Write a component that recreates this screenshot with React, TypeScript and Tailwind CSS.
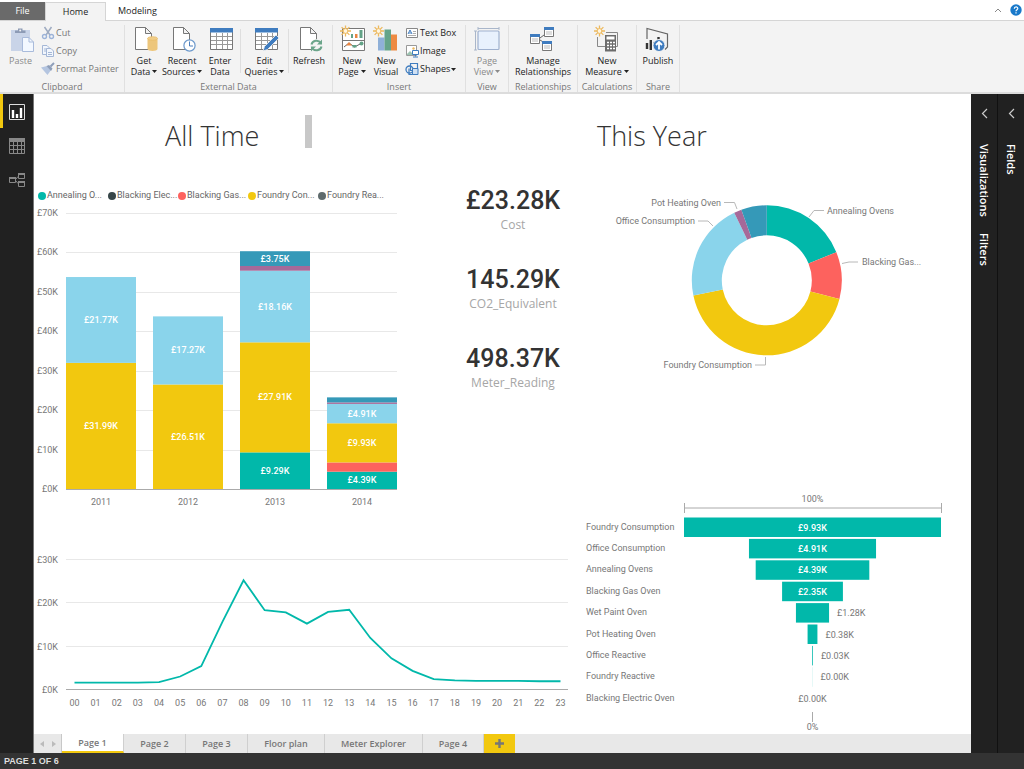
import type { ReactNode } from "react";

const C = {
  teal: "#01b8aa",
  dark: "#374649",
  red: "#fd625e",
  yellow: "#f2c80f",
  slate: "#5f6b6d",
  sky: "#8ad4eb",
  blue: "#3599b8",
  plum: "#a66999",
};

/* ---------- ribbon icons ---------- */

function Svg({ children, small = false }: { children: ReactNode; small?: boolean }) {
  return small ? (
    <svg viewBox="0 0 14 14" className="h-[14px] w-[14px] shrink-0" fill="none" aria-hidden="true">{children}</svg>
  ) : (
    <svg viewBox="-1 0 28 28" className="h-7 w-7 shrink-0" fill="none" aria-hidden="true">{children}</svg>
  );
}

const Page = () => (
  <path d="M4.500 2.500H14.500L20.500 8.500V24.500H4.500ZM14.500 2.500V8.500H20.500" fill="#fff" stroke="#777" />
);

const Sun = () => (
  <g>
    <path d="M5.500 0.500V11.500M0 6H11M1.600 2.100L9.400 9.900M9.400 2.100L1.600 9.900" stroke="#edb95e" strokeWidth="1.300" />
    <circle cx="5.500" cy="6" r="2.400" fill="#fff6e0" stroke="#edb95e" />
  </g>
);

const PasteIcon = () => (
  <Svg>
    <path d="M3 5H22V26H3Z" fill="#c9d4e8" />
    <path d="M7 8V5.500H10V3.500H14.500V5.500H17.500V8Z" fill="#8d9bb5" />
    <circle cx="12.200" cy="5.500" r="1" fill="#f3f3f3" />
    <path d="M14.500 12.500H21L25.500 17V26.500H14.500Z" fill="#f3f8ff" stroke="#a9bbdb" />
    <path d="M21 12.500V17H25.500" stroke="#a9bbdb" />
  </Svg>
);
const CutIcon = () => (
  <Svg small>
    <path d="M3.500 1L9 9M10.500 1L5 9" stroke="#9eabc1" strokeWidth="1.500" />
    <circle cx="3.500" cy="10.500" r="2" stroke="#9cb3d8" strokeWidth="1.400" />
    <circle cx="10.500" cy="10.500" r="2" stroke="#9cb3d8" strokeWidth="1.400" />
  </Svg>
);
const CopyIcon = () => (
  <Svg small>
    <path d="M1.500 1.500H6L8.500 4V10.500H1.500ZM3 5H6M3 7H6" fill="#f2f6fc" stroke="#a4b7d6" />
    <path d="M5.500 4.500H10L12.500 7V12.500H5.500ZM7 8.500H11M7 10.500H11" fill="#f2f6fc" stroke="#a4b7d6" />
  </Svg>
);
const BrushIcon = () => (
  <Svg small>
    <path d="M0 5.500L6 4L10 8L6.500 13Z" fill="#b4c5e0" />
    <path d="M5.500 4L8 3L11.500 6.500L10 9Z" fill="#8e9eb9" />
    <path d="M9.500 4.500L13 1" stroke="#8e9eb9" strokeWidth="2" />
  </Svg>
);
const GetDataIcon = () => (
  <Svg>
    <Page />
    <path d="M16.500 13.500V24C16.500 26.500 26.500 26.500 26.500 24V13.500Z" fill="#edc67b" />
    <ellipse cx="21.500" cy="13.500" rx="5" ry="1.800" fill="#f0cd88" stroke="#e9bd68" strokeWidth=".8" />
  </Svg>
);
const RecentIcon = () => (
  <Svg>
    <Page />
    <circle cx="20.500" cy="20.500" r="5.600" fill="#fff" stroke="#6b98cb" strokeWidth="1.200" />
    <path d="M20.500 16.500V21H24" stroke="#4b7fbd" />
  </Svg>
);
const TableBody = () => (
  <g>
    <path d="M3.500 3.500H25.500V24.500H3.500Z" fill="#fff" stroke="#777" />
    <path d="M3 3H26V7.500H3Z" fill="#3f7cbf" />
    <path d="M4 11.500H25M4 15.500H25M4 19.500H25M9.500 8V24M15.500 8V24M20.500 8V24" stroke="#999" />
  </g>
);
const EnterIcon = () => (
  <Svg><TableBody /></Svg>
);
const EditIcon = () => (
  <Svg>
    <TableBody />
    <path d="M11 26L12.500 21.500L24 10L27 13L15.500 24.500Z" fill="#3f7cbf" stroke="#f3f3f3" strokeWidth=".8" />
  </Svg>
);
const RefreshIcon = () => (
  <Svg>
    <Page />
    <circle cx="20.500" cy="20.500" r="6.500" fill="#f3f3f3" />
    <path d="M15.500 19.500C16.500 15 22.500 14.500 25 18M25.500 21.500C24.500 26 18.500 26.500 16 23" stroke="#6ba58a" strokeWidth="2" />
    <path d="M26 14.500V19.500H21ZM15 26.500V21.500H20Z" fill="#6ba58a" />
  </Svg>
);
const NewPageIcon = () => (
  <Svg>
    <path d="M3.500 3.500H25.500V25.500H3.500ZM4 15.500H25" fill="#fff" stroke="#777" />
    <path d="M12 9H14V13H12ZM20.500 5H23.500V13H20.500Z" fill="#63a387" />
    <path d="M16 9H18.500V13H16Z" fill="#ea8540" />
    <path d="M5 22L10 18L15.500 22L23 18" stroke="#666" />
    <path d="M7 20.500L10 17L13 20.500Z" fill="#ea8540" />
    <circle cx="22.500" cy="18.500" r="2" fill="#63a387" />
    <path d="M13.500 20H17.500V22.500H13.500Z" fill="#63a387" />
    <g transform="translate(1 0)"><Sun /></g>
  </Svg>
);
const NewVisualIcon = () => (
  <Svg>
    <path d="M5 12.500H11.500V25.500H5Z" fill="#8fb0d8" />
    <path d="M11.500 4.500H18V25.500H11.500Z" fill="#65a489" />
    <path d="M18 9.500H24V25.500H18Z" fill="#ed8a42" />
    <Sun />
  </Svg>
);
const TextBoxIcon = () => (
  <Svg small>
    <path d="M1.500 2.500H12.500V11.500H1.500Z" fill="#fff" stroke="#888" />
    <path d="M3 8L5 4L7 8M3.800 7H6.300" stroke="#3f7cbf" />
    <path d="M8 5.500H11M8 7.500H11M3 9.500H11" stroke="#999" strokeWidth=".8" />
  </Svg>
);
const ImageIcon = () => (
  <Svg small>
    <path d="M1.500 1.500H11.500V11.500H1.500Z" fill="#fff" stroke="#999" />
    <path d="M2 10L5 7L8 10V11H2Z" fill="#9cc3b1" />
    <circle cx="8.500" cy="4.500" r="1.200" fill="#edb95e" />
    <path d="M7.500 6.500H13.500V10.500H7.500ZM10.500 11V12.500M8 13H13" fill="#fff" stroke="#3f7cbf" />
  </Svg>
);
const ShapesIcon = () => (
  <Svg small>
    <circle cx="4.500" cy="7.500" r="3.500" stroke="#3f7cbf" strokeWidth="1.300" />
    <path d="M5.500 1.500H12.500V8.500H5.500ZM4 6.500V12.500H9" stroke="#3f7cbf" strokeWidth="1.200" />
    <path d="M7.500 6.500H13V12.500H7.500Z" fill="#cfe0f3" stroke="#3f7cbf" />
  </Svg>
);
const PageViewIcon = () => (
  <Svg>
    <path d="M4 3.500H25M4 2V5M25 2V5M1.500 6V25M0 6H3M0 25H3" stroke="#a9b6ca" />
    <rect x="4" y="6" width="21" height="18.500" rx="1" fill="#e8f1fd" stroke="#9fb1cf" strokeWidth="1.200" />
  </Svg>
);
const MiniWindow = ({ x, y }: { x: number; y: number }) => (
  <g transform={`translate(${x} ${y})`}>
    <path d="M.5.500H9.500V9.500H.5Z" fill="#fff" stroke="#777" />
    <path d="M0 0H10V3H0Z" fill="#3f7cbf" />
    <path d="M2 5H8M2 7H8" stroke="#aaa" strokeWidth=".8" />
  </g>
);
const RelationIcon = () => (
  <Svg>
    <path d="M10 13L18 7M10 15L18 20" stroke="#666" />
    <MiniWindow x={0} y={9} />
    <MiniWindow x={14} y={2} />
    <MiniWindow x={12} y={16} />
  </Svg>
);
const MeasureIcon = () => (
  <Svg>
    <path d="M3.500 12V21.500H11M12 7.500H23.500V21.500H21" stroke="#888" />
    <path d="M11 10H22V26.500H11Z" fill="#6c6c6c" />
    <path d="M12.500 11.500H20.500V14.500H12.500Z" fill="#fff" />
    <path d="M13 17.500H15M16 17.500H18M19 17.500H21M13 20.500H15M16 20.500H18M19 20.500H21M13 23.500H15M16 23.500H18M19 23.500H21" stroke="#fff" strokeWidth="1.600" />
    <Sun />
  </Svg>
);
const PublishIcon = () => (
  <Svg>
    <path d="M2 14V3.500L22.500 9V22L20 24.500" stroke="#666" strokeWidth="1.200" />
    <path d="M2 18V24M5.800 15V25M9.500 17V22M13.500 12V16" stroke="#333" strokeWidth="2.400" />
    <circle cx="14" cy="20.500" r="6" fill="#3f7cbf" stroke="#f3f3f3" />
    <path d="M14 24.500V17.500M11 20L14 17L17 20" stroke="#fff" strokeWidth="1.800" />
  </Svg>
);

/* ---------- ribbon ---------- */

function Big({ icon, lines, menu, muted, width }: { icon: ReactNode; lines: string[]; menu?: boolean; muted?: boolean; width: string }) {
  return (
    <button className={`flex flex-col items-center ${width} ${muted ? "text-[#8a8a8a]" : "text-[#222]"}`}>
      <span className="mb-0.5">{icon}</span>
      {lines.map((t, i) => (
        <span key={t} className="flex items-center gap-0.5 whitespace-nowrap leading-[11px]">
          {t}
          {menu && i === lines.length - 1 && <Caret />}
        </span>
      ))}
    </button>
  );
}

const Caret = () => (
  <svg viewBox="0 0 5 3" className="h-[3px] w-[5px]" aria-hidden="true"><path d="M0 0H5L2.500 3Z" fill="currentColor" /></svg>
);

function Small({ icon, text, menu, muted }: { icon: ReactNode; text: string; menu?: boolean; muted?: boolean }) {
  return (
    <button className={`flex h-[18px] items-center gap-px whitespace-nowrap ${muted ? "text-[#777]" : "text-[#222]"}`}>
      {icon}
      {text}
      {menu && <Caret />}
    </button>
  );
}

function Group({ label, width, children }: { label: string; width: string; children: ReactNode }) {
  return (
    <section className={`flex shrink-0 flex-col border-r border-[#e0e0e0] ${width}`}>
      <div className="flex h-[57px] items-start">{children}</div>
      <h2 className="text-center leading-[11px] text-[#777]">{label}</h2>
    </section>
  );
}

const Rule = () => <span className="mx-px mt-1 h-11 w-px bg-[#dedede]" />;

function Ribbon() {
  return (
    <header className="font-['Open_Sans','Noto_Sans',sans-serif] text-[9px]">
      <nav className="flex h-[21px] items-stretch border-b border-[#d5d5d5] bg-white text-[#222]" aria-label="Ribbon tabs">
        <button className="mt-0.5 w-[45px] bg-[#6a6a6a] text-white">File</button>
        <button className="-mb-px mt-0.5 w-[61px] border-x border-t border-[#d5d5d5] bg-[#f3f3f3]">Home</button>
        <button className="mt-0.5 w-[63px]">Modeling</button>
        <div className="ml-auto flex items-center gap-2 pr-0.5">
          <button aria-label="Collapse ribbon">
            <svg viewBox="0 0 8 6" className="h-1.5 w-2" fill="none"><path d="M1 5L4 2L7 5" stroke="#888" /></svg>
          </button>
          <button aria-label="Help">
            <svg viewBox="0 0 12 12" className="h-3 w-3" fill="none">
              <circle cx="6" cy="6" r="5.700" fill="#1979ca" />
              <path d="M4.300 4.800C4.300 2.300 7.900 2.500 7.800 4.500C7.800 5.700 6 5.800 6 7.300M6 8.300V9.600" stroke="#fff" strokeWidth="1.200" />
            </svg>
          </button>
        </div>
      </nav>
      <div className="flex h-[73px] border-b-2 border-[#dcdcdc] bg-[#f3f3f3] pt-1">
        <Group label="Clipboard" width="w-[125px]">
          <Big icon={<PasteIcon />} lines={["Paste"]} muted width="w-[41px]" />
          <div className="-mt-px flex flex-col">
            <Small icon={<CutIcon />} text="Cut" muted />
            <Small icon={<CopyIcon />} text="Copy" muted />
            <Small icon={<BrushIcon />} text="Format Painter" muted />
          </div>
        </Group>
        <Group label="External Data" width="w-[208px]">
          <Big icon={<GetDataIcon />} lines={["Get", "Data"]} menu width="w-[38px]" />
          <Big icon={<RecentIcon />} lines={["Recent", "Sources"]} menu width="w-[38px]" />
          <Big icon={<EnterIcon />} lines={["Enter", "Data"]} width="w-[38px]" />
          <Rule />
          <Big icon={<EditIcon />} lines={["Edit", "Queries"]} menu width="w-[45px]" />
          <Rule />
          <Big icon={<RefreshIcon />} lines={["Refresh"]} width="w-[38px]" />
        </Group>
        <Group label="Insert" width="w-[133px]">
          <span className="w-0.5" />
          <Big icon={<NewPageIcon />} lines={["New", "Page"]} menu width="w-[34px]" />
          <Big icon={<NewVisualIcon />} lines={["New", "Visual"]} width="w-[34px]" />
          <div className="-mt-px flex flex-col pl-0.5">
            <Small icon={<TextBoxIcon />} text="Text Box" />
            <Small icon={<ImageIcon />} text="Image" />
            <Small icon={<ShapesIcon />} text="Shapes" menu />
          </div>
        </Group>
        <Group label="View" width="w-[43px]">
          <Big icon={<PageViewIcon />} lines={["Page", "View"]} menu muted width="w-full" />
        </Group>
        <Group label="Relationships" width="w-[69px]">
          <Big icon={<RelationIcon />} lines={["Manage", "Relationships"]} width="w-full" />
        </Group>
        <Group label="Calculations" width="w-[59px]">
          <Big icon={<MeasureIcon />} lines={["New", "Measure"]} menu width="w-full" />
        </Group>
        <Group label="Share" width="w-[43px]">
          <Big icon={<PublishIcon />} lines={["Publish"]} width="w-full" />
        </Group>
      </div>
    </header>
  );
}

/* ---------- side rails ---------- */

function ViewRail() {
  return (
    <nav className="flex w-[34px] shrink-0 flex-col border-r border-[#777] bg-[#212121]" aria-label="Views">
      <button aria-label="Report view" className="flex h-[34px] items-center border-l-3 border-[#f2c80f] pl-1.5 pt-0.5">
        <svg viewBox="0 0 16 16" className="h-4 w-4" fill="none">
          <path d="M.5.500H15.500V15.500H.5Z" stroke="#ddd" />
          <path d="M4 14V6M8 14V10M12 14V4" stroke="#fff" strokeWidth="2.400" />
        </svg>
      </button>
      <button aria-label="Data view" className="flex h-[34px] items-center pl-[9px] pt-0.5">
        <svg viewBox="0 0 16 16" className="h-4 w-4" fill="none">
          <path d="M.5.500H15.500V15.500H.5ZM1 7.500H15M1 11.500H15M4.500 4V15M8.500 4V15M12.500 4V15" stroke="#888" />
          <path d="M0 0H16V4H0Z" fill="#888" />
        </svg>
      </button>
      <button aria-label="Relationship view" className="flex h-[34px] items-center pl-[9px] pt-0.5">
        <svg viewBox="0 0 16 16" className="h-4 w-4" fill="none" stroke="#888">
          <path d="M.5 5.500H6.500V10.500H.5ZM9.500 1.500H15.500V6.500H9.500ZM9.500 9.500H15.500V14.500H9.500ZM7 7L9 4.500M7 9L9 11.500" />
          <path d="M0 6H7M9 2H16M9 10H16" strokeWidth="2" />
        </svg>
      </button>
    </nav>
  );
}

function Pane({ titles }: { titles: string[] }) {
  return (
    <aside className="flex w-[26px] shrink-0 flex-col items-center bg-[#212121] pt-3.5 font-['Open_Sans','Noto_Sans',sans-serif] text-[11px] font-semibold text-white">
      <button aria-label={`Expand ${titles[0]}`} className="mb-[25px]">
        <svg viewBox="0 0 7 11" className="h-[11px] w-[7px]" fill="none"><path d="M6 1L1.500 5.500L6 10" stroke="#ccc" strokeWidth="1.200" /></svg>
      </button>
      <div className="flex flex-col gap-4">
        {titles.map((t) => (
          <h2 key={t} className="leading-4 [writing-mode:vertical-rl]">{t}</h2>
        ))}
      </div>
    </aside>
  );
}

/* ---------- charts ---------- */

const LEGEND = [
  { name: "Annealing O...", dot: "bg-[#01b8aa]" },
  { name: "Blacking Elec...", dot: "bg-[#374649]" },
  { name: "Blacking Gas...", dot: "bg-[#fd625e]" },
  { name: "Foundry Con...", dot: "bg-[#f2c80f]" },
  { name: "Foundry Rea...", dot: "bg-[#5f6b6d]" },
];

type Segment = { value: number; color: string; label?: boolean };
const YEARS: { year: string; parts: Segment[] }[] = [
  { year: "2011", parts: [{ value: 31.99, color: C.yellow, label: true }, { value: 21.77, color: C.sky, label: true }] },
  { year: "2012", parts: [{ value: 26.51, color: C.yellow, label: true }, { value: 17.27, color: C.sky, label: true }] },
  {
    year: "2013",
    parts: [
      { value: 9.29, color: C.teal, label: true },
      { value: 27.91, color: C.yellow, label: true },
      { value: 18.16, color: C.sky, label: true },
      { value: 1.2, color: C.plum },
      { value: 3.75, color: C.blue, label: true },
    ],
  },
  {
    year: "2014",
    parts: [
      { value: 4.39, color: C.teal, label: true },
      { value: 2.35, color: C.red },
      { value: 9.93, color: C.yellow, label: true },
      { value: 4.91, color: C.sky, label: true },
      { value: 0.38, color: C.plum },
      { value: 1.28, color: C.blue },
    ],
  },
];

const money = (v: number) => `£${v.toFixed(2)}K`;
const AXIS = "fill-[#777] font-[Roboto,sans-serif] text-[9px]";
const BAR_LABEL = "fill-white font-[Roboto,sans-serif] text-[9px] font-medium";
const CALLOUT = "fill-[#777] font-[Roboto,sans-serif] text-[9px]";

function YearChart() {
  const k = 276 / 70;
  return (
    <figure className="min-w-0">
      <ul className="flex h-4 items-center pl-1 font-[Roboto,sans-serif] text-[9px] text-[#666]">
        {LEGEND.map((l) => (
          <li key={l.name} className="flex w-[70px] items-center gap-px whitespace-nowrap">
            <span className={`h-2 w-2 shrink-0 rounded-full ${l.dot}`} />
            {l.name}
          </li>
        ))}
      </ul>
      <svg viewBox="0 0 366 316" className="w-full" role="img" aria-label="Cost by year">
        {[0, 10, 20, 30, 40, 50, 60, 70].map((t) => {
          const y = Math.round(285 - t * k) + 0.5;
          return (
            <g key={t}>
              <path d={`M32 ${y}H363`} stroke={t ? "#e8e8e8" : "#aaa"} />
              <text x="24" y={y + 2.5} textAnchor="end" className={AXIS}>£{t}K</text>
            </g>
          );
        })}
        {YEARS.map((col, i) => {
          let top = 285;
          const x = 32 + i * 87;
          return (
            <g key={col.year}>
              {col.parts.map((p) => {
                const h = p.value * k;
                top -= h;
                return (
                  <g key={p.color}>
                    <rect x={x} y={top} width="70" height={h} fill={p.color} />
                    {p.label && <text x={x + 35} y={top + h / 2 + 3} textAnchor="middle" className={BAR_LABEL}>{money(p.value)}</text>}
                  </g>
                );
              })}
              <text x={x + 35} y="301" textAnchor="middle" className={AXIS}>{col.year}</text>
            </g>
          );
        })}
      </svg>
    </figure>
  );
}

const HOURLY = [1.6, 1.6, 1.6, 1.6, 1.7, 3, 5.4, 15.6, 25.2, 18.3, 17.8, 15.2, 17.9, 18.4, 11.9, 7.2, 4.3, 2.4, 2.1, 2, 2, 2, 1.9, 1.9];

function HourChart() {
  const k = 130 / 30;
  const x = (i: number) => 40.5 + i * 21.13;
  return (
    <svg viewBox="0 0 538 214" className="w-full" role="img" aria-label="Cost by hour">
      {[0, 10, 20, 30].map((t) => {
        const y = Math.round(169 - t * k) + 0.5;
        return (
          <g key={t}>
            <path d={`M32 ${y}H534`} stroke={t ? "#e8e8e8" : "#aaa"} />
            <text x="24" y={y + 3} textAnchor="end" className={AXIS}>£{t}K</text>
          </g>
        );
      })}
      <polyline points={HOURLY.map((v, i) => `${x(i)},${169.5 - v * k}`).join(" ")} fill="none" stroke={C.teal} strokeWidth="1.800" />
      {HOURLY.map((_, i) => (
        <text key={i} x={x(i)} y="186" textAnchor="middle" className={AXIS}>{String(i).padStart(2, "0")}</text>
      ))}
    </svg>
  );
}

const SLICES = [
  { value: 4.39, color: C.teal },
  { value: 2.35, color: C.red },
  { value: 9.93, color: C.yellow },
  { value: 4.91, color: C.sky },
  { value: 0.38, color: C.plum },
  { value: 1.28, color: C.blue },
];
const CALLOUTS = [
  { text: "Annealing Ovens", x: 255, y: 34, anchor: "start", line: "M237 37L242 30.500H252" },
  { text: "Blacking Gas...", x: 290, y: 85, anchor: "start", line: "M270 83.500L277 82H286" },
  { text: "Foundry Consumption", x: 180, y: 188, anchor: "end", line: "M183 185H193.500V177" },
  { text: "Office Consumption", x: 123, y: 44, anchor: "end", line: "M126 41H136L141 46" },
  { text: "Pot Heating Oven", x: 149, y: 26, anchor: "end", line: "M152 22.500H162.500L165 29" },
] as const;

function Donut() {
  const total = SLICES.reduce((s, p) => s + p.value, 0);
  const at = (r: number, a: number) => `${(194.8 + r * Math.sin(a)).toFixed(2)} ${(100.3 - r * Math.cos(a)).toFixed(2)}`;
  let a0 = 0;
  return (
    <svg viewBox="0 0 399 300" className="w-full" role="img" aria-label="Cost by meter this year">
      {SLICES.map((s) => {
        const a1 = a0 + (s.value / total) * Math.PI * 2;
        const d = `M${at(75, a0)}A75 75 0 0 1 ${at(75, a1)}L${at(45, a1)}A45 45 0 0 0 ${at(45, a0)}Z`;
        a0 = a1;
        return <path key={s.color} d={d} fill={s.color} />;
      })}
      {CALLOUTS.map((c) => (
        <g key={c.text}>
          <path d={c.line} fill="none" stroke="#b8b8b8" />
          <text x={c.x} y={c.y} textAnchor={c.anchor} className={CALLOUT}>{c.text}</text>
        </g>
      ))}
    </svg>
  );
}

const FUNNEL: [string, number][] = [
  ["Foundry Consumption", 9.93],
  ["Office Consumption", 4.91],
  ["Annealing Ovens", 4.39],
  ["Blacking Gas Oven", 2.35],
  ["Wet Paint Oven", 1.28],
  ["Pot Heating Oven", 0.38],
  ["Office Reactive", 0.03],
  ["Foundry Reactive", 0.004],
  ["Blacking Electric Oven", 0],
];

function Funnel() {
  const mid = 240.5;
  return (
    <svg viewBox="0 0 399 254" className="w-full" role="img" aria-label="Cost funnel by meter">
      <text x={mid} y="22" textAnchor="middle" className={CALLOUT}>100%</text>
      <path d="M112.500 23V33M369.500 23V33M112.500 28H369.500" stroke="#aaa" fill="none" />
      {FUNNEL.map(([name, v], i) => {
        const w = (v / 9.93) * 257;
        const y = 37.5 + i * 21.4;
        const inside = w > 50;
        const centered = inside || v === 0;
        return (
          <g key={name}>
            <text x="14" y={y + 12} className={AXIS}>{name}</text>
            <rect x={mid - w / 2} y={y} width={w} height="19.500" fill={C.teal} />
            <text x={centered ? mid : mid + w / 2 + 8} y={y + 13} textAnchor={centered ? "middle" : "start"} className={inside ? BAR_LABEL : CALLOUT}>
              {money(v)}
            </text>
          </g>
        );
      })}
      <path d="M240.500 232V242" stroke="#aaa" />
      <text x={mid} y="250" textAnchor="middle" className={CALLOUT}>0%</text>
    </svg>
  );
}

function Kpi({ value, label }: { value: string; label: string }) {
  return (
    <div className="flex flex-col items-center">
      <dd className="font-[Roboto,sans-serif] text-[25px] font-medium leading-7 text-[#333]">{value}</dd>
      <dt className="order-last font-['Open_Sans','Noto_Sans',sans-serif] text-[12px] leading-5 text-[#a6a6a6]">{label}</dt>
    </div>
  );
}

function Report() {
  return (
    <main className="grid grow grid-cols-[538fr_399fr] content-start bg-white">
      <div className="min-w-0">
        <div className="flex h-[94px] items-start pl-[131px] pt-5">
          <h1 className="font-['Open_Sans','Noto_Sans',sans-serif] text-[27px] font-light leading-[44px] text-[#333]">All Time</h1>
          <span className="ml-[46px] mt-px h-[33px] w-[7px] bg-[#c8c8c8]" />
        </div>
        <div className="grid grid-cols-[366fr_172fr]">
          <YearChart />
          <dl className="-mt-px flex flex-col gap-[31px] pl-[54px]">
            <Kpi value="£23.28K" label="Cost" />
            <Kpi value="145.29K" label="CO2_Equivalent" />
            <Kpi value="498.37K" label="Meter_Reading" />
          </dl>
        </div>
        <HourChart />
      </div>
      <div className="min-w-0">
        <div className="h-[86px] pl-[25px] pt-5">
          <h1 className="font-['Open_Sans','Noto_Sans',sans-serif] text-[27px] font-light leading-[44px] text-[#333]">This Year</h1>
        </div>
        <Donut />
        <Funnel />
      </div>
    </main>
  );
}

function PageTabs() {
  const tabs = [
    { name: "Page 1", w: "w-[62px]" },
    { name: "Page 2", w: "w-[62px]" },
    { name: "Page 3", w: "w-[62px]" },
    { name: "Floor plan", w: "w-[77px]" },
    { name: "Meter Explorer", w: "w-[98px]" },
    { name: "Page 4", w: "w-[61px]" },
  ];
  return (
    <nav className="flex h-[19px] bg-[#e8e8e8] font-['Open_Sans','Noto_Sans',sans-serif] text-[9px] font-semibold text-[#777]" aria-label="Pages">
      <div className="flex w-7 items-center justify-center gap-2 border-r border-[#c8c8c8]">
        <button aria-label="Previous page"><svg viewBox="0 0 4 6" className="h-1.5 w-1"><path d="M4 0V6L0 3Z" fill="#bbb" /></svg></button>
        <button aria-label="Next page"><svg viewBox="0 0 4 6" className="h-1.5 w-1"><path d="M0 0V6L4 3Z" fill="#bbb" /></svg></button>
      </div>
      {tabs.map((t, i) => (
        <button key={t.name} className={`${t.w} border-r border-[#cfcfcf] ${i === 0 ? "border-b-2 border-b-[#f2c80f] bg-white" : ""}`}>
          {t.name}
        </button>
      ))}
      <button aria-label="Add page" className="flex w-[31px] items-center justify-center bg-[#f2c80f]">
        <svg viewBox="0 0 9 9" className="h-[9px] w-[9px]"><path d="M4.500 0V9M0 4.500H9" stroke="#777" strokeWidth="2.400" /></svg>
      </button>
    </nav>
  );
}

export default function App() {
  return (
    <div className="flex min-h-screen flex-col bg-white">
      <Ribbon />
      <div className="flex grow">
        <ViewRail />
        <div className="flex min-w-0 grow flex-col">
          <Report />
          <PageTabs />
        </div>
        <div className="flex shrink-0 gap-px bg-[#111]">
          <Pane titles={["Visualizations", "Filters"]} />
          <Pane titles={["Fields"]} />
        </div>
      </div>
      <footer className="h-4 bg-[#333] pl-1 font-['Liberation_Sans',Arial,sans-serif] text-[9px] font-bold leading-4 text-[#ddd]">PAGE 1 OF 6</footer>
    </div>
  );
}
